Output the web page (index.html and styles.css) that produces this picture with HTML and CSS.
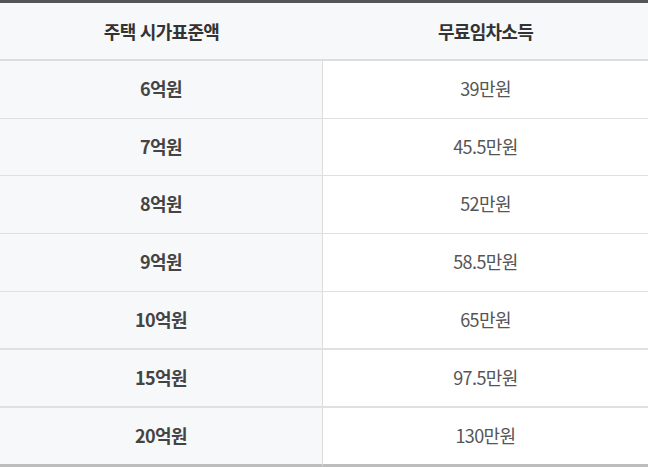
FILE: index.html
```html
<!DOCTYPE html>
<html lang="ko">
<head>
<meta charset="utf-8">
<link rel="stylesheet" href="styles.css">
</head>
<body>
<table class="tax-table">
  <colgroup><col class="col-a"><col class="col-b"></colgroup>
  <thead>
    <tr><th>주택 시가표준액</th><th>무료임차소득</th></tr>
  </thead>
  <tbody>
    <tr class="h57"><td>6억원</td><td>39만원</td></tr>
    <tr class="h56"><td>7억원</td><td>45.5만원</td></tr>
    <tr class="h57"><td>8억원</td><td>52만원</td></tr>
    <tr class="h57"><td>9억원</td><td>58.5만원</td></tr>
    <tr class="h56 thick"><td>10억원</td><td>65만원</td></tr>
    <tr class="h56 thick"><td>15억원</td><td>97.5만원</td></tr>
    <tr class="h56 last"><td>20억원</td><td>130만원</td></tr>
  </tbody>
</table>
</body>
</html>
```
FILE: styles.css
```css
html, body {
  margin: 0;
  padding: 0;
  background: #ffffff;
}
body {
  font-family: "Noto Sans CJK KR", "Noto Sans", sans-serif;
}
.tax-table {
  width: 648px;
  table-layout: fixed;
  border-collapse: separate;
  border-spacing: 0;
  border-top: 3px solid #555555;
}
.col-a { width: 323px; }
.col-b { width: 325px; }
.tax-table th {
  height: 56px;
  padding: 0;
  background: #f7f8fa;
  border-bottom: 2px solid #dddddd;
  color: #333333;
  font-size: 18px;
  font-weight: 700;
  letter-spacing: -0.7px;
  text-align: center;
  vertical-align: middle;
}
.tax-table td {
  padding: 0 0 3px;
  text-align: center;
  vertical-align: middle;
  font-size: 18px;
  line-height: 24px;
  letter-spacing: -0.6px;
  border-bottom: 1px solid #e0e0e0;
}
.tax-table td:first-child {
  background: #f7f8fa;
  border-right: 1px solid #dddddd;
  color: #444444;
  font-weight: 700;
}
.tax-table td:last-child {
  background: #ffffff;
  color: #555555;
  font-weight: 400;
}
.h57 td { height: 54px; }
.h56 td { height: 53px; }
.thick td { border-bottom-width: 2px; }
.last td { border-bottom: 3px solid #bdbdbd; }
```
